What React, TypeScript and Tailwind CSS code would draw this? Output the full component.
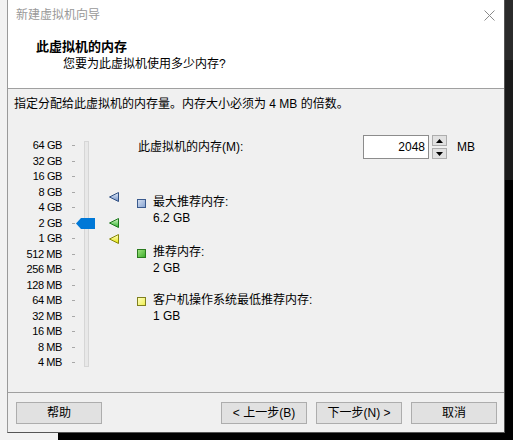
import React from "react";

const FONT = "font-['Liberation_Sans','Noto_Sans_CJK_SC',sans-serif]";

const SIZES = [
  "64 GB",
  "32 GB",
  "16 GB",
  "8 GB",
  "4 GB",
  "2 GB",
  "1 GB",
  "512 MB",
  "256 MB",
  "128 MB",
  "64 MB",
  "32 MB",
  "16 MB",
  "8 MB",
  "4 MB",
];

const MARKERS = [
  { top: "top-[57px]", id: "b", stroke: "#2f4f82", from: "#e3ecf8", to: "#6f8fc6" },
  { top: "top-[83px]", id: "g", stroke: "#1d781d", from: "#d8f5c8", to: "#2cb22c" },
  { top: "top-[99px]", id: "y", stroke: "#86860a", from: "#ffffd0", to: "#e6e600" },
];

const LEGEND = [
  { label: "最大推荐内存:", value: "6.2 GB", box: "border-[#3a5a8e] bg-gradient-to-br from-[#d2ddef] to-[#8aa6d2]", mt: "mt-[35px]" },
  { label: "推荐内存:", value: "2 GB", box: "border-[#2a7a1e] bg-gradient-to-br from-[#9be27c] to-[#3aae28]", mt: "mt-[18px]" },
  { label: "客户机操作系统最低推荐内存:", value: "1 GB", box: "border-[#7f7f1f] bg-gradient-to-br from-[#ffffb8] to-[#eeee4c]", mt: "mt-[16px]" },
];

const Marker = ({ m }: { m: (typeof MARKERS)[number] }) => (
  <svg className={`absolute left-[101px] ${m.top}`} width="10" height="10" viewBox="0 0 10 10">
    <defs>
      <linearGradient id={`grad-${m.id}`} x1="0" y1="0" x2="0" y2="1">
        <stop offset="0" stopColor={m.from} />
        <stop offset="1" stopColor={m.to} />
      </linearGradient>
    </defs>
    <polygon points="0.5,5 9.5,0.5 9.5,9.5" fill={`url(#grad-${m.id})`} stroke={m.stroke} strokeWidth="1" />
  </svg>
);

const Button = ({ children }: { children: React.ReactNode }) => (
  <button className="w-[86px] h-[22px] bg-[#e1e1e1] border border-[#adadad] text-[12px] leading-[20px] text-black">
    {children}
  </button>
);

export default function App() {
  return (
    <div className={`w-[513px] h-[440px] bg-black flex flex-col ${FONT} text-[12px] text-black`}>
      <div className="flex h-[433px]">
        <div className="w-[7px] bg-[#f2f2f2]" />

        {/* wizard window */}
        <div className="w-[498px] flex flex-col border-l border-l-[#9a9a9a] border-r border-r-[#555] border-b border-b-[#555] bg-[#f0f0f0]">
          <div className="h-[30px] bg-white flex items-center justify-between">
            <span className="pl-[8px] text-[#999] leading-[16px]">新建虚拟机向导</span>
            <svg className="mr-[9px]" width="11" height="11" viewBox="0 0 11 11">
              <path d="M0.5 0.5 L10.5 10.5 M10.5 0.5 L0.5 10.5" stroke="#8a8a8a" strokeWidth="1" />
            </svg>
          </div>

          <div className="h-[58px] bg-white pt-[9px]">
            <div className="pl-[28px] text-[13px] font-bold leading-[16px]">此虚拟机的内存</div>
            <div className="pl-[55px] mt-[1px] leading-[16px]">您要为此虚拟机使用多少内存?</div>
          </div>
          <div className="h-px bg-[#a0a0a0]" />

          <div className="h-[303px] flex flex-col">
            <div className="pl-[6px] pt-[7px] leading-[16px]">
              指定分配给此虚拟机的内存量。内存大小必须为 4 MB 的倍数。
            </div>

            <div className="flex mt-[23px]">
              {/* slider */}
              <div className="relative w-[129px] h-[236px] flex">
                <div className="w-[54px] pt-[3px] text-right text-[11px] tracking-[-0.4px]">
                  {SIZES.map((s) => (
                    <div key={s} className="h-[15.5px] leading-[15.5px]">
                      {s}
                    </div>
                  ))}
                </div>
                <div className="ml-[10px] w-[3px] pt-[3px]">
                  {SIZES.map((s) => (
                    <div key={s} className="h-[15.5px] flex items-center">
                      <div className="w-[3px] h-px bg-[#a8a8a8]" />
                    </div>
                  ))}
                </div>
                <div className="ml-[9px] mt-[6px] w-[5px] h-[226px] border border-[#d6d6d6] bg-[#e8e8e8]" />

                <svg className="absolute left-[68px] top-[83px]" width="19" height="11" viewBox="0 0 19 11">
                  <polygon points="0,5.5 5,0 19,0 19,11 5,11" fill="#0078d7" />
                </svg>
                {MARKERS.map((m) => (
                  <Marker key={m.id} m={m} />
                ))}
              </div>

              {/* values */}
              <div className="flex-1 flex flex-col">
                <div className="h-[24px] flex items-center">
                  <span className="w-[226px] pl-[1px] leading-[16px]">此虚拟机的内存(M):</span>
                  <div className="w-[66px] h-[24px] bg-white border border-[#8c8c8c] text-right pr-[3px] leading-[22px]">
                    2048
                  </div>
                  <div className="ml-[3px] w-[15px] h-[24px] flex flex-col justify-between">
                    <div className="h-[11px] bg-[#e1e1e1] border border-[#adadad] flex items-center justify-center">
                      <svg width="7" height="4" viewBox="0 0 7 4">
                        <polygon points="3.5,0 7,4 0,4" fill="#000" />
                      </svg>
                    </div>
                    <div className="h-[11px] bg-[#e1e1e1] border border-[#adadad] flex items-center justify-center">
                      <svg width="7" height="4" viewBox="0 0 7 4">
                        <polygon points="0,0 7,0 3.5,4" fill="#000" />
                      </svg>
                    </div>
                  </div>
                  <span className="ml-[10px] leading-[16px]">MB</span>
                </div>

                {LEGEND.map((l) => (
                  <div key={l.label} className={`${l.mt} flex`}>
                    <div className={`mt-[5px] w-[9px] h-[9px] border ${l.box}`} />
                    <div className="ml-[7px] leading-[16px]">
                      <div>{l.label}</div>
                      <div>{l.value}</div>
                    </div>
                  </div>
                ))}
              </div>
            </div>
          </div>

          <div className="h-px bg-[#a0a0a0]" />
          <div className="flex-1 flex pt-[9px] pl-[8px] pr-[7px]">
            <Button>帮助</Button>
            <div className="ml-auto flex gap-[9px]">
              <Button>&lt; 上一步(B)</Button>
              <Button>下一步(N) &gt;</Button>
              <Button>取消</Button>
            </div>
          </div>
        </div>

        <div className="flex-1 flex flex-col">
          <div className="h-[60px] bg-[#2b2b2b]" />
          <div className="h-[120px] bg-[#1a1a1a]" />
          <div className="flex-1 bg-black" />
        </div>
      </div>
      <div className="flex-1 flex">
        <div className="w-[58px] bg-[#f2f2f2]" />
        <div className="flex-1 bg-black" />
      </div>
    </div>
  );
}
